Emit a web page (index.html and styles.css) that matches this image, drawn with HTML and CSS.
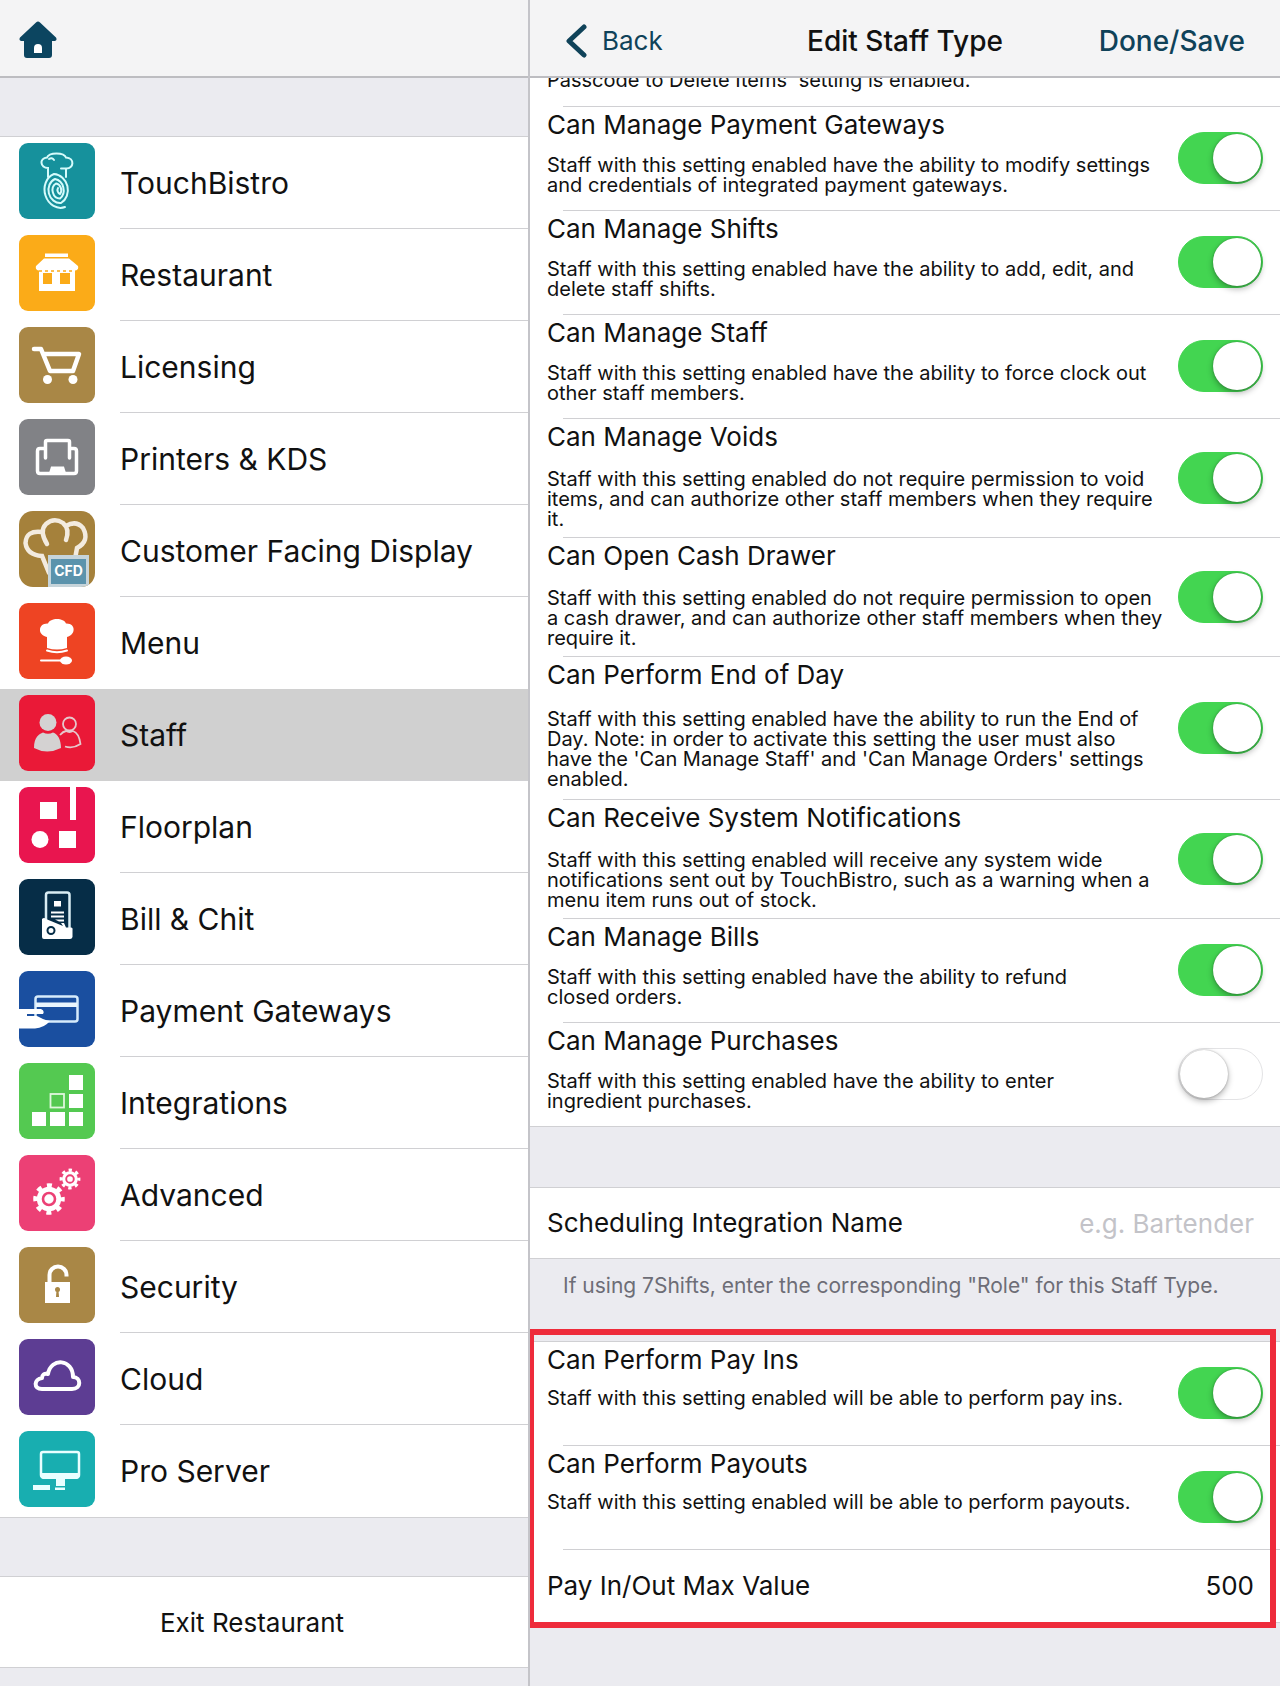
FILE: index.html
```html
<!DOCTYPE html>
<html lang="en">
<head>
<meta charset="utf-8">
<title>Edit Staff Type</title>
<meta name="viewport" content="width=device-width, initial-scale=1">
<link rel="stylesheet" href="styles.css">
</head>
<body>
<div class="app">
  <aside class="sidebar">
    <header class="bar bar-home">
      <a class="home" href="#home" aria-label="Home">
        <svg width="38" height="38" viewBox="0 0 38 38"><path d="M19 0.500Q20 .5 21 1.500L37 16.500Q38.500 19 36 20H33V34Q33 37 30 37H8Q5 37 5 34V20H2Q-.5 19 1 16.500L17 1.500Q18 .5 19 .5Z" fill="#0c4560"/><path d="M15 32V27a4 4 0 0 1 8 0v5z" fill="#fff"/></svg>
      </a>
    </header>
    <nav class="menu" aria-label="Settings">
      <a class="item" href="#touchbistro">
        <svg class="icon" viewBox="0 0 76 76"><rect width="76" height="76" rx="9" fill="#16919c"/><g fill="none" stroke="#d5fbfb" stroke-width="2" stroke-linecap="round"><path d="M29 34V25C21 25 20 15 28 14.500C30 9 45 9 47 14.500C56 15 55 26 47 25.500V34M42 25.500H47M30 16q3-2 5 1"/><path d="M46 64A14.500 17 -12 0 1 35 31A14 15.500 -12 0 1 42 60A11 12.500 -12 0 1 36 36A10 11 -12 0 1 41 55.500A7 8 -12 0 1 37 40.500A6 6.500 -12 0 1 41 51A3.500 4 -12 0 1 39 45"/></g></svg>
        <span class="name">TouchBistro</span>
      </a>
      <a class="item" href="#restaurant">
        <svg class="icon" viewBox="0 0 76 76"><rect width="76" height="76" rx="9" fill="#fbab18"/><path fill="#fff" d="M26 18.500H49V22H26ZM25 23.500H50L59 31Q60 35 56 35.500V56H20V35.500Q16 35 17 31Z"/><path fill="#fbab18" d="M24 38H33V49H24ZM41 38H51V49H41Z"/><path d="M20 36H56" stroke="#fbab18" stroke-width="1.500" stroke-dasharray="3 3"/></svg>
        <span class="name">Restaurant</span>
      </a>
      <a class="item" href="#licensing">
        <svg class="icon" viewBox="0 0 76 76"><rect width="76" height="76" rx="9" fill="#a98746"/><path d="M15 22H22L31 44H54L60 27H25" fill="none" stroke="#fff" stroke-width="4.500" stroke-linecap="round" stroke-linejoin="round"/><circle cx="28.500" cy="52.500" r="4.500" fill="#fff"/><circle cx="54" cy="52.500" r="4.500" fill="#fff"/></svg>
        <span class="name">Licensing</span>
      </a>
      <a class="item" href="#printers">
        <svg class="icon" viewBox="0 0 76 76"><rect width="76" height="76" rx="9" fill="#818286"/><path d="M26.500 39V23Q26.500 21.500 28 21.500H49Q50.500 21.500 50.500 23V39M26 29.500H21Q18.500 29.500 18.500 32V52Q18.500 54.500 21 54.500H55Q57.500 54.500 57.500 52V32Q57.500 29.500 55 29.500H51" fill="none" stroke="#fff" stroke-width="3.500" stroke-linecap="round"/><path d="M30 54L32 47.500H45L47 54Z" fill="#fff"/></svg>
        <span class="name">Printers &amp; KDS</span>
      </a>
      <a class="item" href="#cfd">
        <svg class="icon" viewBox="0 0 76 76"><defs><clipPath id="cfd-tile"><rect width="76" height="76" rx="14"/></clipPath></defs><g clip-path="url(#cfd-tile)"><rect width="76" height="76" fill="#a5813b"/><path d="M30 62L23 45Q8 44 6.500 32Q7 19 23 21M28 33Q20 20 27 13Q35 6 44 12Q51 18 47 29M47 15Q57 9 64 17Q71 30 58 37L56 48" fill="none" stroke="#f3ebdf" stroke-width="4.500" stroke-linecap="round"/><rect x="29" y="44" width="41" height="34" fill="#c6d4da"/><rect x="32" y="48" width="35" height="25" fill="#5b93ac"/><text x="49.500" y="65" class="cfd-text">CFD</text></g></svg>
        <span class="name">Customer Facing Display</span>
      </a>
      <a class="item" href="#menu">
        <svg class="icon" viewBox="0 0 76 76"><rect width="76" height="76" rx="9" fill="#ee4423"/><path fill="#fff" d="M28 45V34C18 32 19 20 29 20.500C31 14.500 45 14.500 47 20.500C57 20 57 32 48 34V45Q38 48 28 45Z"/><path d="M28 47.500Q38 51 48 47.500M22 57.500H44" fill="none" stroke="#fff" stroke-width="2" stroke-linecap="round"/><ellipse cx="47" cy="57.500" rx="6" ry="4" fill="#fff"/></svg>
        <span class="name">Menu</span>
      </a>
      <a class="item current" href="#staff" aria-current="page">
        <svg class="icon" viewBox="0 0 76 76"><rect width="76" height="76" rx="9" fill="#ea1937"/><circle cx="29" cy="27.500" r="8.500" fill="#d4d2d2"/><path d="M15 53C15 42 20 39 24 37.500Q29 40 34 37.500C39 39 42 45 42 53Q28 60 15 53Z" fill="#d4d2d2"/><g fill="none" stroke="#e6c8cc" stroke-width="1.800"><circle cx="50.500" cy="29" r="6.500"/><path d="M41 40Q44 36.500 47 36Q50.500 38 54 36Q60 38 61.500 49Q54 54 46 51.500"/></g></svg>
        <span class="name">Staff</span>
      </a>
      <a class="item" href="#floorplan">
        <svg class="icon" viewBox="0 0 76 76"><rect width="76" height="76" rx="9" fill="#e9154f"/><path fill="#fff" d="M21 15H38V32H21ZM51 0H57V33H51ZM40 44H57V61H40Z"/><circle cx="21" cy="52.500" r="8.500" fill="#fff"/></svg>
        <span class="name">Floorplan</span>
      </a>
      <a class="item" href="#bill">
        <svg class="icon" viewBox="0 0 76 76"><rect width="76" height="76" rx="9" fill="#062d47"/><path d="M27 42V16Q27 13.500 29.500 13.500H48Q50.500 13.500 50.500 16V49" fill="none" stroke="#d9edf4" stroke-width="2.500"/><path d="M35 22H42V27.500H35ZM32 32.500H45V34.500H32ZM32 36.500H45V38.500H32ZM36 40.500H45V42.500H40ZM23 40Q25 38 27 40L44 47L42 44H45L47 48.500H52Q54 48.500 53.500 51V58Q53 60 51 60H25Q23 60 23 58Z" fill="#fff"/><circle cx="32" cy="51.500" r="3.500" fill="none" stroke="#062d47" stroke-width="2"/></svg>
        <span class="name">Bill &amp; Chit</span>
      </a>
      <a class="item" href="#gateways">
        <svg class="icon" viewBox="0 0 76 76"><rect width="76" height="76" rx="9" fill="#1a4fa0"/><rect x="16.500" y="25.500" width="42" height="25" rx="2.500" fill="none" stroke="#d6ebfb" stroke-width="2.500"/><path d="M17 31.500H58V36H17Z" fill="#e9f5fd"/><path d="M0 38H22Q26 39.500 24 43H8V45H18L24 48Q26 49 31 50Q25 57 16 57.500H0Z" fill="#fff"/></svg>
        <span class="name">Payment Gateways</span>
      </a>
      <a class="item" href="#integrations">
        <svg class="icon" viewBox="0 0 76 76"><rect width="76" height="76" rx="9" fill="#54c951"/><path fill="#fff" d="M50 12H64V27H50ZM50 31H64V45H50ZM50 49H64V63H50ZM31 49H46V63H31ZM13 49H27V63H13Z"/><rect x="31.500" y="31" width="13.500" height="13.500" fill="none" stroke="#dff7dd" stroke-width="1.800"/></svg>
        <span class="name">Integrations</span>
      </a>
      <a class="item" href="#advanced">
        <svg class="icon" viewBox="0 0 76 76"><rect width="76" height="76" rx="9" fill="#ec4075"/><circle cx="30" cy="44" r="12.200" fill="#fff"/><circle cx="30" cy="44" r="13.500" fill="none" stroke="#fff" stroke-width="4.500" stroke-dasharray="5 5.603" stroke-dashoffset="2.500"/><circle cx="30" cy="44" r="6" fill="none" stroke="#ec4075" stroke-width="2.600"/><circle cx="51" cy="24" r="7.800" fill="#fff"/><circle cx="51" cy="24" r="8.800" fill="none" stroke="#fff" stroke-width="3.200" stroke-dasharray="3.300 3.611" stroke-dashoffset="1.650"/><circle cx="51" cy="24" r="3.800" fill="none" stroke="#ec4075" stroke-width="1.900"/></svg>
        <span class="name">Advanced</span>
      </a>
      <a class="item" href="#security">
        <svg class="icon" viewBox="0 0 76 76"><rect width="76" height="76" rx="9" fill="#a98746"/><path d="M30.500 36V28a8.500 8.500 0 0 1 17 0v1.500" fill="none" stroke="#fff" stroke-width="4"/><path d="M26 35H51V56H26Z" fill="#fff"/><circle cx="38.500" cy="42.500" r="2.500" fill="#a98746"/><path d="M37.500 43H39.500L40 50H37Z" fill="#a98746"/></svg>
        <span class="name">Security</span>
      </a>
      <a class="item" href="#cloud">
        <svg class="icon" viewBox="0 0 76 76"><rect width="76" height="76" rx="9" fill="#5d3d93"/><path d="M23 50H53C63 50 62 38 54 38C54 20 32 18 29 35C25 34 23 36 23 39C15 40 14 50 23 50Z" fill="none" stroke="#fff" stroke-width="4" stroke-linejoin="round"/></svg>
        <span class="name">Cloud</span>
      </a>
      <a class="item" href="#pro-server">
        <svg class="icon" viewBox="0 0 76 76"><rect width="76" height="76" rx="9" fill="#18aeb0"/><rect x="22" y="21" width="38" height="25" rx="2" fill="none" stroke="#e8ffff" stroke-width="2.500"/><path d="M22 42H60V46Q60 48 58 48H46V55H37V48H24Q22 48 22 46ZM36 56.500H46V59H36ZM14 54H31V59H14Z" fill="#e8ffff"/></svg>
        <span class="name">Pro Server</span>
      </a>
    </nav>
    <button class="exit" type="button">Exit Restaurant</button>
  </aside>

  <section class="detail">
    <header class="bar bar-edit">
      <a class="back" href="#back"><svg width="22" height="34" viewBox="0 0 22 34"><path d="M19 3L4 17L19 31" fill="none" stroke="#0f4259" stroke-width="5" stroke-linecap="round" stroke-linejoin="round"/></svg>Back</a>
      <h1 class="heading">Edit Staff Type</h1>
      <button class="done" type="button">Done/Save</button>
    </header>
    <main class="content">
      <div class="group">
        <p class="desc tail">Passcode to Delete Items' setting is enabled.</p>
        <div class="row">
          <label class="text" for="gateways-switch"><span class="title">Can Manage Payment Gateways</span>
            <span class="desc">Staff with this setting enabled have the ability to modify settings<br>and credentials of integrated payment gateways.</span></label>
          <input class="switch" id="gateways-switch" type="checkbox" checked>
        </div>
        <div class="row">
          <label class="text" for="shifts-switch"><span class="title">Can Manage Shifts</span>
            <span class="desc">Staff with this setting enabled have the ability to add, edit, and<br>delete staff shifts.</span></label>
          <input class="switch" id="shifts-switch" type="checkbox" checked>
        </div>
        <div class="row">
          <label class="text" for="staff-switch"><span class="title">Can Manage Staff</span>
            <span class="desc">Staff with this setting enabled have the ability to force clock out<br>other staff members.</span></label>
          <input class="switch" id="staff-switch" type="checkbox" checked>
        </div>
        <div class="row long">
          <label class="text" for="voids-switch"><span class="title">Can Manage Voids</span>
            <span class="desc">Staff with this setting enabled do not require permission to void<br>items, and can authorize other staff members when they require<br>it.</span></label>
          <input class="switch" id="voids-switch" type="checkbox" checked>
        </div>
        <div class="row long">
          <label class="text" for="drawer-switch"><span class="title">Can Open Cash Drawer</span>
            <span class="desc">Staff with this setting enabled do not require permission to open<br>a cash drawer, and can authorize other staff members when they<br>require it.</span></label>
          <input class="switch" id="drawer-switch" type="checkbox" checked>
        </div>
        <div class="row longest">
          <label class="text" for="eod-switch"><span class="title">Can Perform End of Day</span>
            <span class="desc">Staff with this setting enabled have the ability to run the End of<br>Day. Note: in order to activate this setting the user must also<br>have the 'Can Manage Staff' and 'Can Manage Orders' settings<br>enabled.</span></label>
          <input class="switch" id="eod-switch" type="checkbox" checked>
        </div>
        <div class="row long">
          <label class="text" for="notify-switch"><span class="title">Can Receive System Notifications</span>
            <span class="desc">Staff with this setting enabled will receive any system wide<br>notifications sent out by TouchBistro, such as a warning when a<br>menu item runs out of stock.</span></label>
          <input class="switch" id="notify-switch" type="checkbox" checked>
        </div>
        <div class="row">
          <label class="text" for="bills-switch"><span class="title">Can Manage Bills</span>
            <span class="desc">Staff with this setting enabled have the ability to refund<br>closed orders.</span></label>
          <input class="switch" id="bills-switch" type="checkbox" checked>
        </div>
        <div class="row">
          <label class="text" for="purchases-switch"><span class="title">Can Manage Purchases</span>
            <span class="desc">Staff with this setting enabled have the ability to enter<br>ingredient purchases.</span></label>
          <input class="switch" id="purchases-switch" type="checkbox">
        </div>
      </div>

      <div class="group group-spaced">
        <div class="field">
          <label class="title" for="integration-name">Scheduling Integration Name</label>
          <input class="value" id="integration-name" type="text" placeholder="e.g. Bartender">
        </div>
      </div>
      <p class="note">If using 7Shifts, enter the corresponding "Role" for this Staff Type.</p>

      <div class="group highlighted">
        <div class="row">
          <label class="text" for="payins-switch"><span class="title">Can Perform Pay Ins</span>
            <span class="desc">Staff with this setting enabled will be able to perform pay ins.</span></label>
          <input class="switch" id="payins-switch" type="checkbox" checked>
        </div>
        <div class="row">
          <label class="text" for="payouts-switch"><span class="title">Can Perform Payouts</span>
            <span class="desc">Staff with this setting enabled will be able to perform payouts.</span></label>
          <input class="switch" id="payouts-switch" type="checkbox" checked>
        </div>
        <div class="field">
          <label class="title" for="max-value">Pay In/Out Max Value</label>
          <input class="value" id="max-value" type="text" value="500">
        </div>
      </div>
    </main>
  </section>
</div>
</body>
</html>
```
FILE: styles.css
```css
:root {
  --line: #d0d0d3;
  --panel: #ebebf0;
  --brand: #0f4259;
  --pad: 17px;
}

* {
  box-sizing: border-box;
}

body {
  margin: 0;
  background: var(--panel);
  color: #111;
  font-family: Inter, "Liberation Sans", sans-serif;
}

a {
  color: inherit;
  text-decoration: none;
}

button {
  border: 0;
  background: none;
  color: inherit;
  font: inherit;
  cursor: pointer;
}

.app {
  display: grid;
  grid-template-columns: 53fr 75fr;
  min-height: 100vh;
}

.bar {
  display: flex;
  align-items: center;
  height: 78px;
  border-bottom: 2px solid #bdbdc1;
  background: #f4f4f5;
}

/* Sidebar */

.sidebar {
  border-right: 2px solid #c4c4c9;
}

.bar-home {
  padding: 4px 19px 0;
}

.home {
  display: flex;
}

.menu {
  margin-top: 58px;
  border-top: 1px solid var(--line);
  border-bottom: 1px solid var(--line);
  background: #fff;
}

.item {
  display: flex;
  gap: 25px;
  height: 92px;
  padding-left: 19px;
}

.icon {
  flex: none;
  width: 76px;
  height: 76px;
  margin-top: 6px;
}

.name {
  display: flex;
  flex: 1;
  align-items: center;
  border-bottom: 1px solid var(--line);
  font-size: 30px;
}

.item:last-child .name,
.item:has(+ .current) .name {
  border-bottom-color: transparent;
}

.current {
  background: #d0d0d0;
}

.cfd-text {
  fill: #fff;
  font-size: 14px;
  font-weight: 700;
  text-anchor: middle;
}

.exit {
  display: block;
  width: 100%;
  height: 92px;
  margin-top: 58px;
  padding: 0 24px 0 0;
  border-top: 1px solid var(--line);
  border-bottom: 1px solid var(--line);
  background: #fff;
  font-size: 26px;
}

/* Detail pane */

.bar-edit {
  display: grid;
  grid-template-columns: 1fr auto 1fr;
  padding: 5px 35px 0;
  font-size: 26px;
}

.back {
  display: flex;
  gap: 15px;
  align-items: center;
  color: var(--brand);
}

.heading,
.done {
  font-size: 28px;
  font-weight: 500;
}

.heading {
  margin: 0;
}

.done {
  justify-self: end;
  padding: 0;
  color: var(--brand);
}

.content {
  overflow: hidden;
  padding-bottom: 56px;
}

.group {
  background: #fff;
  border-bottom: 1px solid var(--line);
}

.group-spaced {
  margin-top: 60px;
  border-top: 1px solid var(--line);
}

.tail {
  margin: -8px 0 0;
  padding: 0 var(--pad) 16px;
}

.row,
.field {
  display: flex;
  justify-content: space-between;
  align-items: center;
  padding: 0 var(--pad);
  background: linear-gradient(var(--line), var(--line)) 33px 0 / 100% 1px no-repeat;
}

.row {
  min-height: 104px;
}

.text {
  align-self: stretch;
  white-space: nowrap;
}

.title,
.desc {
  display: block;
}

.title {
  font-size: 26px;
  line-height: 38px;
}

.desc {
  font-size: 20px;
  line-height: 20px;
}

.text .desc {
  padding: 11px 0 10px;
}

.long .desc {
  padding: 13px 0 8px;
}

.longest .desc {
  padding: 15px 0 10px;
}

.switch {
  flex: none;
  width: 85px;
  height: 52px;
  margin: 0;
  padding: 1px;
  border: 1px solid #e3e3e5;
  border-radius: 26px;
  appearance: none;
  background: #fff;
  cursor: pointer;
}

.switch::before {
  content: "";
  display: block;
  width: 48px;
  height: 48px;
  border-radius: 50%;
  background: #fff;
  box-shadow: 0 3px 6px rgb(0 0 0 / 30%), 0 0 2px rgb(0 0 0 / 30%);
}

.switch:checked {
  border-color: #43d551;
  background: #43d551;
}

.switch:checked::before {
  margin-left: auto;
}

.field {
  min-height: 73px;
  padding-right: 26px;
}

.group-spaced .field {
  min-height: 70px;
  background: none;
}

.value {
  width: 200px;
  padding: 0;
  border: 0;
  background: none;
  color: inherit;
  font: inherit;
  font-size: 26px;
  text-align: right;
}

.value::placeholder {
  color: #c3c3c8;
}

.note {
  margin: 0;
  padding: 15px 33px 43px;
  color: #6d6d76;
  font-size: 21px;
  line-height: 24px;
  white-space: nowrap;
}

.highlighted {
  position: relative;
}

.highlighted .row:first-child {
  background-position: 0 0;
}

.highlighted .text .desc {
  padding-top: 9px;
}

.highlighted::after {
  content: "";
  position: absolute;
  inset: -12px 4px -6px -2px;
  border: 6px solid #ee2b3b;
  pointer-events: none;
}
```
